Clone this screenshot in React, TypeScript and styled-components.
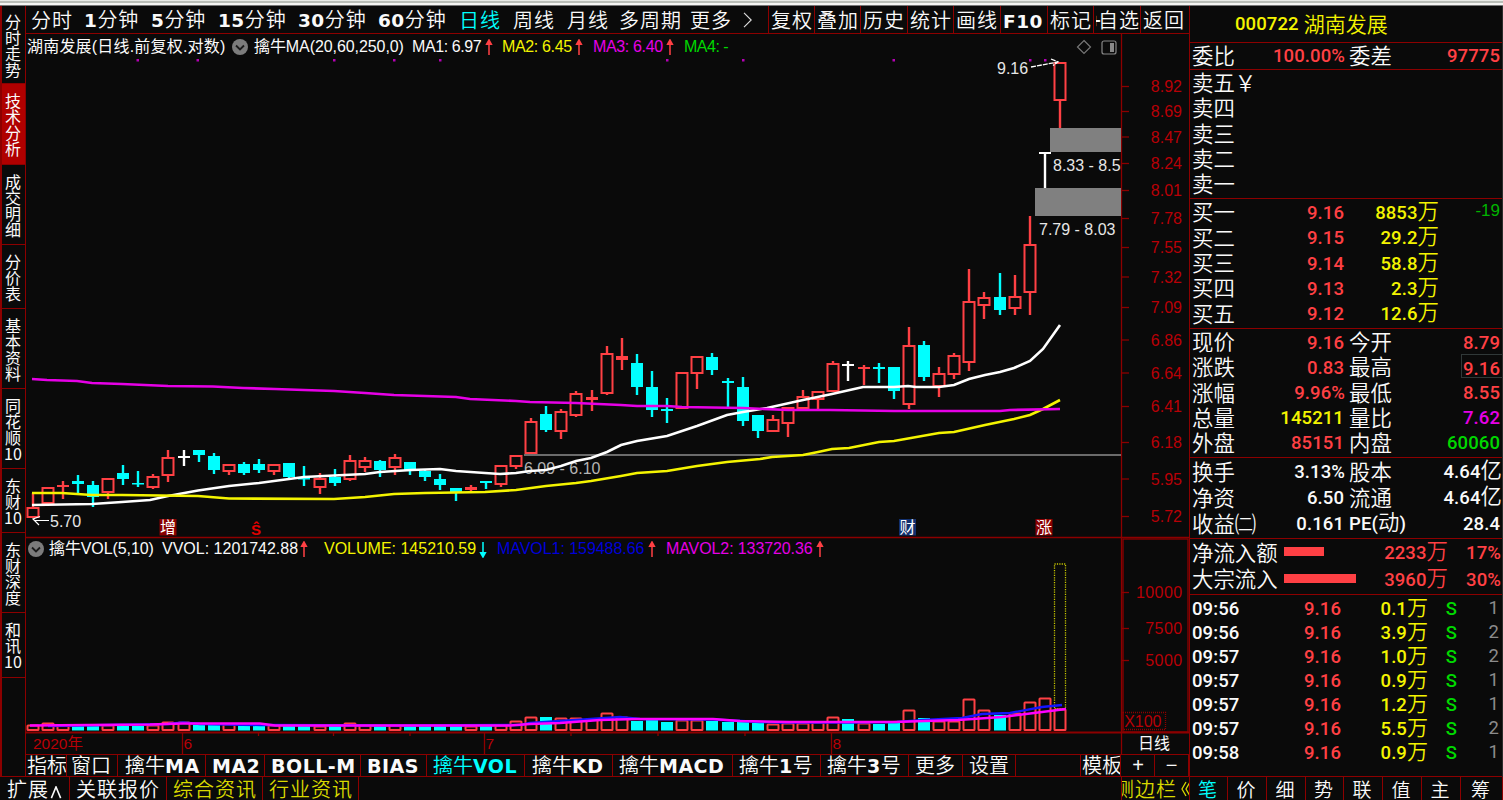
import React from 'react';
import styled, { createGlobalStyle } from 'styled-components';

const LINE = '#8c0000';
const RED = '#ff4044';
const CYAN = '#00ffff';
const YELLOW = '#f4f400';
const MAGENTA = '#e600e6';
const GREEN = '#00d800';
const WHITE = '#fafafa';
const AXIS = '#b80006';

const CJK = '"Noto Sans CJK SC", sans-serif';

/* ---------- data ---------- */

type Kind = 'r' | 'c' | 'w';
// kind, body top, body bottom, high, low, top of the volume bar
type Candle = [Kind, number, number, number, number, number];

const FIRST_X = 32.5;
const STEP = 15.11;
const VOL_BASE = 730;

const candles: Candle[] = [
  ['r', 507, 517, 493, 518, 725],
  ['r', 487, 503, 487, 503, 723],
  ['r', 485, 487, 481, 499, 725],
  ['c', 481, 484, 475, 493, 726],
  ['c', 485, 497, 481, 507, 726],
  ['r', 478, 492, 478, 499, 725],
  ['c', 473, 479, 465, 485, 726],
  ['c', 483, 484, 471, 487, 726],
  ['r', 476, 487, 474, 489, 725],
  ['r', 457, 475, 450, 482, 722],
  ['w', 456, 458, 450, 466, 722],
  ['c', 450, 455, 450, 462, 725],
  ['c', 456, 470, 453, 474, 725],
  ['r', 464, 471, 464, 475, 724],
  ['c', 464, 473, 462, 475, 725],
  ['c', 464, 470, 459, 473, 725],
  ['r', 464, 471, 464, 475, 725],
  ['c', 463, 477, 463, 479, 726],
  ['c', 478, 479, 466, 486, 726],
  ['r', 478, 487, 473, 494, 726],
  ['c', 477, 483, 469, 486, 726],
  ['r', 460, 479, 455, 481, 723],
  ['r', 460, 467, 457, 472, 725],
  ['c', 461, 470, 460, 477, 726],
  ['r', 457, 467, 454, 475, 725],
  ['c', 462, 470, 462, 475, 726],
  ['c', 471, 477, 469, 481, 726],
  ['c', 479, 485, 474, 490, 726],
  ['c', 488, 493, 488, 501, 725],
  ['r', 487, 490, 485, 493, 726],
  ['c', 481, 483, 481, 489, 726],
  ['r', 465, 484, 465, 487, 725],
  ['r', 455, 466, 455, 469, 721],
  ['r', 421, 453, 418, 453, 717],
  ['c', 414, 430, 406, 432, 717],
  ['r', 411, 431, 409, 439, 718],
  ['r', 393, 415, 391, 417, 718],
  ['r', 397, 400, 390, 411, 719],
  ['r', 353, 393, 346, 395, 713],
  ['r', 356, 360, 338, 370, 717],
  ['c', 363, 387, 354, 395, 721],
  ['c', 387, 410, 371, 417, 720],
  ['c', 409, 411, 398, 423, 722],
  ['r', 372, 408, 372, 409, 720],
  ['r', 356, 373, 356, 389, 720],
  ['c', 357, 370, 353, 375, 721],
  ['c', 381, 383, 378, 407, 722],
  ['c', 387, 421, 377, 426, 721],
  ['c', 415, 431, 415, 438, 723],
  ['r', 419, 431, 415, 431, 724],
  ['r', 407, 423, 407, 437, 723],
  ['r', 396, 408, 390, 408, 723],
  ['r', 391, 399, 391, 409, 722],
  ['r', 363, 391, 361, 391, 717],
  ['w', 364, 366, 361, 381, 719],
  ['r', 367, 369, 365, 385, 723],
  ['c', 367, 369, 363, 383, 724],
  ['c', 367, 391, 367, 399, 723],
  ['r', 345, 404, 327, 409, 710],
  ['c', 345, 377, 341, 381, 718],
  ['r', 373, 386, 367, 397, 721],
  ['r', 355, 374, 353, 379, 721],
  ['r', 301, 362, 269, 371, 699],
  ['r', 297, 305, 292, 319, 710],
  ['c', 297, 310, 273, 315, 715],
  ['r', 296, 308, 275, 315, 713],
  ['r', 244, 292, 216, 315, 702],
  ['w', 152, 154, 152, 188, 698],
  ['r', 62, 100, 62, 128, 709],
];

const ma20 =
  '32,505 62,504.5 92,504 122,502 150,500 168,496 198,490.5 229,486 259,483 289,479 304,477 334,475.5 365,474 380,472 411,470 440,469 456,471 485,473 500,474 516,473 530,471 546,470 561,466 576,461 591,458 607,452 621,445 637,441 667,436 697,426 727,415 743,412 767,408 803,400 832,394 863,387 894,387 908,386 916,387 939,387 954,385 969,379 985,375 1000,372 1014,368 1030,361 1043,349 1060,325';
const ma60 =
  '32,493 62,493 92,495 122,495 198,496 229,498.5 334,499 365,497 394,494 425,493 485,492 516,490 546,486 576,483 591,481 621,476 637,473 667,471 697,466 727,462 760,459 772,457 803,455 818,452 832,449 849,448 879,442 894,441 939,433 954,432 985,425 1014,419 1030,415 1043,409 1060,400';
const ma250 =
  '32,379 47,380 77,381 92,383 122,384 168,386 213,386.5 243,388 275,389 304,390 334,391 365,393 394,395 425,396 456,397 470,399 516,401 530,402 576,403 621,405 637,406 667,406 682,407 743,408 788,410 830,410 894,411 1000,411 1010,410 1060,409';
const mavol1 =
  '48,726 168,724 183,722.5 200,724 260,725 400,725.5 520,725 530,723 560,721 591,719 620,717 640,719 713,719.5 760,722 777,722.5 850,722.5 897,722 924,720 962,718 982,714 1010,713 1042,707 1062,705';
const mavol2 =
  '30,725.5 150,724.5 182,723.5 260,723.5 275,725.5 510,725.5 530,724 560,723 600,720 636,719 713,719 740,721 789,722 837,722 893,722 958,720 1002,717 1034,713 1066,709';

const signalDots = [137.5, 197.5, 334, 394, 440, 667, 743, 893.5, 1030, 1045];

const priceAxis: [string, number][] = [
  ['8.92', 86.5],
  ['8.69', 111.5],
  ['8.47', 137],
  ['8.24', 163.5],
  ['8.01', 190.5],
  ['7.78', 218.5],
  ['7.55', 247.5],
  ['7.32', 277],
  ['7.09', 307.5],
  ['6.86', 340],
  ['6.64', 373],
  ['6.41', 406.5],
  ['6.18', 442.5],
  ['5.95', 479],
  ['5.72', 516.5],
];

const volumeAxis: [string, number][] = [
  ['10000', 592.5],
  ['7500', 628.5],
  ['5000', 660.5],
];

const sideTabs: [string[], number][] = [
  [['分', '时', '走', '势'], 78],
  [['技', '术', '分', '析'], 81],
  [['成', '交', '明', '细'], 80],
  [['分', '价', '表'], 64],
  [['基', '本', '资', '料'], 80],
  [['同', '花', '顺', '10'], 80],
  [['东', '财', '10'], 64],
  [['东', '财', '深', '度'], 80],
  [['和', '讯', '10'], 65],
];

const periods: [string, number][] = [
  ['分时', 53],
  ['1分钟', 67],
  ['5分钟', 67],
  ['15分钟', 80],
  ['30分钟', 80],
  ['60分钟', 81],
  ['日线', 54],
  ['周线', 54],
  ['月线', 52],
  ['多周期', 71],
  ['更多', 52],
];

const tools: [string, number][] = [
  ['复权', 46],
  ['叠加', 46],
  ['历史', 47],
  ['统计', 46],
  ['画线', 47],
  ['F10', 47],
  ['标记', 46],
  ['+自选', 47],
  ['返回', 49],
];

const indicatorTabs: [string, number, number][] = [
  ['指标', 41, 1],
  ['窗口', 51, 4],
  ['擒牛MA', 88, 7],
  ['MA2', 59, 6],
  ['BOLL-M', 96, 6],
  ['BIAS', 66, 6],
  ['擒牛VOL', 98, 6],
  ['擒牛KD', 88, 7],
  ['擒牛MACD', 120, 6],
  ['擒牛1号', 88, 6],
  ['擒牛3号', 88, 6],
  ['更多', 54, 6],
  ['设置', 53, 6],
];

const sellRows = ['卖五', '卖四', '卖三', '卖二', '卖一'];

const buyRows = [
  ['买一', '9.16', '8853万', '-19'],
  ['买二', '9.15', '29.2万', ''],
  ['买三', '9.14', '58.8万', ''],
  ['买四', '9.13', '2.3万', ''],
  ['买五', '9.12', '12.6万', ''],
];

type Quote = [string, string, string, string, string, string];
const quoteRows: Quote[] = [
  ['现价', '9.16', RED, '今开', '8.79', RED],
  ['涨跌', '0.83', RED, '最高', '9.16', RED],
  ['涨幅', '9.96%', RED, '最低', '8.55', RED],
  ['总量', '145211', YELLOW, '量比', '7.62', MAGENTA],
  ['外盘', '85151', RED, '内盘', '60060', GREEN],
];
const capitalRows: Quote[] = [
  ['换手', '3.13%', WHITE, '股本', '4.64亿', WHITE],
  ['净资', '6.50', WHITE, '流通', '4.64亿', WHITE],
  ['收益㈡', '0.161', WHITE, 'PE(动)', '28.4', WHITE],
];

const ticks = [
  ['09:56', '0.1万', '1'],
  ['09:56', '3.9万', '2'],
  ['09:57', '1.0万', '2'],
  ['09:57', '0.9万', '1'],
  ['09:57', '1.2万', '1'],
  ['09:57', '5.5万', '2'],
  ['09:58', '0.9万', '1'],
];

const panelTabs: [string, number][] = [
  ['笔', 38],
  ['价', 39],
  ['细', 39],
  ['势', 38],
  ['联', 39],
  ['值', 39],
  ['主', 39],
  ['筹', 42],
];

/* ---------- text helpers ---------- */

// Latin runs are set in a heavy face while the Chinese around them stays light
const Mixed = ({ text, as: Run }: { text: string; as: React.ElementType }) => (
  <>
    {(text.match(/[\x21-\x7e]+|[^\x21-\x7e]+/g) || []).map((part, i) =>
      /^[\x21-\x7e]/.test(part) ? <Run key={i}>{part}</Run> : <span key={i}>{part}</span>
    )}
  </>
);

const Heavy = styled.span`
  font-family: 'DejaVu Sans', sans-serif;
  font-weight: 700;
  font-size: 18.5px;
  letter-spacing: 0.5px;
`;

const TabHeavy = styled(Heavy)`
  font-size: 19px;
`;

const Digits = styled.span`
  font-family: Roboto, sans-serif;
  font-weight: 500;
  font-size: 18.5px;
  letter-spacing: 0.1px;
`;

/* ---------- app ---------- */

const App = () => (
  <>
    <GlobalStyle />
    <Window>
      <WindowEdge />
      <Body>
        <Workspace>
          <Upper>
            <SideBar>
              {sideTabs.map(([chars, height], i) => (
                <SideTab key={i} $h={height} $active={i === 1}>
                  {chars.map((c, j) => (
                    <span key={j}>{c}</span>
                  ))}
                </SideTab>
              ))}
            </SideBar>
            <Content>
              <Toolbar>
                {periods.map(([name, width]) => (
                  <Period key={name} $w={width} $active={name === '日线'}>
                    <Mixed text={name} as={Heavy} />
                  </Period>
                ))}
                <MoreArrow viewBox="0 0 12 20">
                  <path d="M1 1 L10 10 L1 19" />
                </MoreArrow>
                {tools.map(([name, width]) => (
                  <Tool key={name} $w={width}>
                    {name === '+自选' ? (
                      <Clipped>
                        <Plus>+</Plus>自选
                      </Clipped>
                    ) : (
                      <Mixed text={name} as={Heavy} />
                    )}
                  </Tool>
                ))}
              </Toolbar>
              <ChartArea>
                <PriceHeader />
                <VolumeHeader />
                <Chart />
              </ChartArea>
              <BottomRows>
                <IndicatorBar>
                  {indicatorTabs.map(([name, width, pad]) => (
                    <Indicator key={name} $w={width} $pad={pad} $active={name === '擒牛VOL'}>
                      <Mixed text={name} as={TabHeavy} />
                    </Indicator>
                  ))}
                  <Indicator $w={65} $pad={0} />
                  <Indicator $w={40} $pad={1}>
                    模板
                  </Indicator>
                </IndicatorBar>
                <Zoom $w={33}>+</Zoom>
                <Zoom $w={34}>−</Zoom>
              </BottomRows>
            </Content>
          </Upper>
          <StatusBar>
            <Status $w={70} $pad={7}>
              扩展
              <Caret viewBox="0 0 14 14">
                <path d="M2 13 L7 1 L12 13" />
              </Caret>
            </Status>
            <Status $w={97} $pad={6}>
              关联报价
            </Status>
            <Status $w={96} $pad={6} $color="#d8d800">
              综合资讯
            </Status>
            <Status $w={96} $pad={6} $color="#d8d800">
              行业资讯
            </Status>
            <StatusFill />
            <SideToggle>
              侧边栏
              <Chevrons viewBox="0 0 8 16">
                <path d="M5 1 L1 8 L5 15 M9 1 L5 8 L9 15" />
              </Chevrons>
            </SideToggle>
          </StatusBar>
        </Workspace>
        <QuotePanel />
      </Body>
    </Window>
  </>
);

const Fold = () => (
  <FoldIcon viewBox="0 0 16 16">
    <circle cx="8" cy="8" r="8" fill="#7c7c7c" />
    <path d="M4 6.5 L8 10.5 L12 6.5" stroke="#1c1c1c" strokeWidth="1.8" fill="none" />
  </FoldIcon>
);

const Arrow = ({ down = false }: { down?: boolean }) => (
  <ArrowIcon viewBox="0 0 8 18">
    {down ? (
      <path d="M4 1 V17 M1.5 12.5 L4 17 L6.5 12.5 Z" stroke={CYAN} fill={CYAN} strokeWidth="1.6" />
    ) : (
      <path d="M4 17 V1 M1.5 5.5 L4 1 L6.5 5.5 Z" stroke={RED} fill={RED} strokeWidth="1.6" />
    )}
  </ArrowIcon>
);

const PriceHeader = () => (
  <Legend $top={4} $left={1}>
    <LegendText $w={205} $ls={0.2}>
      湖南发展(日线.前复权.对数)
    </LegendText>
    <Fold />
    <LegendText $w={158} $ls={-0.08} $gap={6}>
      擒牛MA(20,60,250,0)
    </LegendText>
    <LegendText $w={73} $ls={-0.4}>
      MA1: 6.97
    </LegendText>
    <Arrow />
    <LegendText $w={73} $color={YELLOW} $ls={-0.35} $gap={9}>
      MA2: 6.45
    </LegendText>
    <Arrow />
    <LegendText $w={73} $color={MAGENTA} $ls={-0.35} $gap={10}>
      MA3: 6.40
    </LegendText>
    <Arrow />
    <LegendText $w={44} $color={GREEN} $ls={-0.5} $gap={10}>
      MA4: -
    </LegendText>
    <LegendTools viewBox="0 0 42 16">
      <path d="M8 1.5 L14.5 8 L8 14.5 L1.5 8 Z" fill="none" stroke="#777" strokeWidth="1.2" />
      <rect x="26" y="2" width="14" height="13" rx="2" fill="none" stroke="#888" strokeWidth="1.2" />
      <rect x="34" y="4" width="4" height="9" fill="#888" />
    </LegendTools>
  </Legend>
);

const VolumeHeader = () => (
  <Legend $top={506} $left={2}>
    <Fold />
    <LegendText $w={113} $gap={5} $ls={-0.1}>
      擒牛VOL(5,10)
    </LegendText>
    <LegendText $w={138} $ls={0}>
      VVOL: 1201742.88
    </LegendText>
    <Arrow />
    <LegendText $w={155} $color={YELLOW} $ls={0} $gap={16}>
      VOLUME: 145210.59
    </LegendText>
    <Arrow down />
    <LegendText $w={151} $color="#0000d8" $ls={-0.05} $gap={10}>
      MAVOL1: 159488.66
    </LegendText>
    <Arrow />
    <LegendText $w={150} $color={MAGENTA} $ls={-0.1} $gap={10}>
      MAVOL2: 133720.36
    </LegendText>
    <Arrow />
  </Legend>
);

const candleColor = { r: RED, c: CYAN, w: '#fff' };

const CandleShape = ({ candle, index }: { candle: Candle; index: number }) => {
  const [kind, top, bottom, high, low] = candle;
  const x = Math.round(FIRST_X + STEP * index);
  const color = candleColor[kind];
  const hollow = kind === 'r' && bottom - top > 5;
  return (
    <g stroke={color} strokeWidth={2.4}>
      {high < top && <line x1={x} x2={x} y1={high} y2={top} />}
      {low > bottom && <line x1={x} x2={x} y1={bottom} y2={low} />}
      {hollow ? (
        <rect x={x - 5.5} y={top + 1} width={11} height={bottom - top - 1} fill="none" strokeWidth={2} />
      ) : (
        <rect x={x - 6} y={top} width={12} height={Math.max(bottom - top, 1.5)} fill={color} stroke="none" />
      )}
    </g>
  );
};

const VolumeShape = ({ candle, index }: { candle: Candle; index: number }) => {
  const [kind, , , , , top] = candle;
  const x = Math.round(FIRST_X + STEP * index);
  const filled = kind === 'c' || index === 54;
  return filled ? (
    <rect x={x - 6} y={top} width={12} height={VOL_BASE - top + 0.5} fill={CYAN} />
  ) : (
    <rect
      x={x - 5.5}
      y={top + 0.5}
      width={11}
      height={VOL_BASE - top - 0.5}
      rx={0.5}
      fill="none"
      stroke={RED}
      strokeWidth={2}
    />
  );
};

const Badge = ({ x, color, text }: { x: number; color: string; text: string }) => (
  <g>
    <rect x={x - 8.5} y={519} width={17} height={16.5} fill={color} />
    <text x={x} y={533} fontSize={16} textAnchor="middle" fill="#fff">
      {text}
    </text>
  </g>
);

const Chart = () => (
  <ChartSvg viewBox="26 34 1163 720">
    {/* frame */}
    <g stroke={LINE} strokeWidth={1.3}>
      <line x1={1121.5} x2={1121.5} y1={34} y2={754} />
      <line x1={26} x2={1189} y1={537.5} y2={537.5} />
      <line x1={26} x2={1189} y1={732.5} y2={732.5} strokeWidth={2} />
      <rect x={1123} y={539} width={65} height={193} fill="none" />
      <line x1={182.5} x2={182.5} y1={733} y2={754} />
      <line x1={484.5} x2={484.5} y1={733} y2={754} />
      <line x1={831.5} x2={831.5} y1={733} y2={754} />
      {[258.5, 333.5, 410, 571, 658, 745].map((x) => (
        <line key={x} x1={x} x2={x} y1={733} y2={736} />
      ))}
      {[...priceAxis, ...volumeAxis].map(([label, y]) => (
        <line key={label} x1={1122} x2={1129} y1={y} y2={y} />
      ))}
      <rect x={1123} y={712.5} width={42.5} height={17} fill="none" strokeDasharray="1 1" />
    </g>

    {/* axis labels */}
    <g fontSize={16} fill={AXIS} textAnchor="end">
      {priceAxis.map(([label, y]) => (
        <text key={label} x={1182} y={y + 5.5}>
          {label}
        </text>
      ))}
      {volumeAxis.map(([label, y]) => (
        <text key={label} x={1182.5} y={y + 5.5} letterSpacing={0.4}>
          {label}
        </text>
      ))}
      <text x={1161.5} y={727}>
        X100
      </text>
    </g>
    <g fontSize={15.5} fill={AXIS}>
      <text x={33} y={749}>
        2020年
      </text>
      <text x={183.5} y={749}>
        6
      </text>
      <text x={485.5} y={749}>
        7
      </text>
      <text x={832.5} y={749}>
        8
      </text>
    </g>
    <text x={1154} y={749} fontSize={16} fill={WHITE} textAnchor="middle">
      日线
    </text>

    {/* gaps */}
    <rect x={1050} y={128} width={71} height={24} fill="#808080" />
    <rect x={1035} y={188} width={86} height={28} fill="#808080" />
    <line x1={524} x2={1121} y1={455} y2={455} stroke="#8c8c8c" strokeWidth={1.5} />
    <svg x={26} y={34} width={1095} height={503} viewBox="26 34 1095 503">
      <g fontSize={16} fill="#e6e6e6">
        <text x={1053} y={171}>
          8.33 - 8.55
        </text>
        <text x={1039} y={235}>
          7.79 - 8.03
        </text>
        <text x={524} y={474} fill="#b4b4b4">
          6.09 - 6.10
        </text>
        <text x={997} y={73.5}>
          9.16
        </text>
        <text x={50} y={527}>
          5.70
        </text>
      </g>
    </svg>
    {signalDots.map((x) => (
      <rect key={x} x={x - 1} y={59} width={2.5} height={2.5} fill="#b400b4" />
    ))}

    {candles.map((candle, i) => (
      <CandleShape key={i} candle={candle} index={i} />
    ))}
    <path d="M1031 67 L1058 62 M1051 59 L1058 62 L1053 65.5" stroke="#fff" strokeWidth={1.3} fill="none" strokeDasharray="5 1" />
    <path d="M49 520.5 H35 M39 525 L33 519 L40 516.5" stroke="#fff" strokeWidth={1.2} fill="none" />

    <g fill="none" strokeWidth={2.6}>
      <polyline points={ma20} stroke="#fff" />
      <polyline points={ma60} stroke={YELLOW} />
      <polyline points={ma250} stroke={MAGENTA} />
    </g>

    <Badge x={168} color="#8a0000" text="增" />
    <Badge x={907.5} color="#12306e" text="财" />
    <Badge x={1044} color="#8a0000" text="涨" />
    <text x={256} y={535} fontSize={15} fontWeight={700} textAnchor="middle" fill="#e00000">
      Ŝ
    </text>

    {/* volume */}
    {candles.map((candle, i) => (
      <VolumeShape key={i} candle={candle} index={i} />
    ))}
    <rect x={1054.5} y={564} width={11} height={145} fill="none" stroke="#c8c800" strokeWidth={1.3} strokeDasharray="1.2 1.2" />
    <g fill="none" strokeWidth={2.4}>
      <polyline points={mavol1} stroke="#1414ff" />
      <polyline points={mavol2} stroke="#ff00ff" />
    </g>
  </ChartSvg>
);

const QuoteRow = ({ row }: { row: Quote }) => {
  const [label, value, color, label2, value2, color2] = row;
  return (
    <Pair>
      <Label>{label}</Label>
      <Value $color={color} $end={value.endsWith('%') ? 4 : 5}>
        <Mixed text={value} as={Digits} />
      </Value>
      <Label>
        <Mixed text={label2} as={Digits} />
      </Label>
      <Value $color={color2} $end={value2.endsWith('亿') ? 0 : 2} $boxed={label2 === '最高'}>
        <Mixed text={value2} as={Digits} />
      </Value>
    </Pair>
  );
};

const QuotePanel = () => (
  <Panel>
    <Title>
      <Digits>000722</Digits>
      <TitleName>湖南发展</TitleName>
    </Title>
    <Section $h={27}>
      <QuoteRow row={['委比', '100.00%', RED, '委差', '97775', RED]} />
    </Section>
    <Section $h={129}>
      {sellRows.map((name, i) => (
        <Pair key={name}>
          <Label>
            {name}
            {i === 0 && '￥'}
          </Label>
        </Pair>
      ))}
    </Section>
    <Section $h={130}>
      {buyRows.map(([name, price, amount, change]) => (
        <Depth key={name}>
          <Label>{name}</Label>
          <Value $color={RED}>
            <Digits>{price}</Digits>
          </Value>
          <Value $color={YELLOW} $end={0}>
            <Mixed text={amount} as={Digits} />
          </Value>
          <Change>{change}</Change>
        </Depth>
      ))}
    </Section>
    <Section $h={129}>
      {quoteRows.map((row) => (
        <QuoteRow key={row[0]} row={row} />
      ))}
    </Section>
    <Section $h={81}>
      {capitalRows.map((row) => (
        <QuoteRow key={row[0]} row={row} />
      ))}
    </Section>
    <Section $h={56}>
      <Flow>
        <Label>净流入额</Label>
        <FlowBar $w={40} />
        <Value $color={RED} $end={0}>
          <Mixed text="2233万" as={Digits} />
        </Value>
        <Value $color={RED} $end={1}>
          <Digits>17%</Digits>
        </Value>
      </Flow>
      <Flow>
        <Label>大宗流入</Label>
        <FlowBar $w={72} />
        <Value $color={RED} $end={0}>
          <Mixed text="3960万" as={Digits} />
        </Value>
        <Value $color={RED} $end={1}>
          <Digits>30%</Digits>
        </Value>
      </Flow>
    </Section>
    <TickList>
      {ticks.map(([time, amount, count], i) => (
        <Tick key={i}>
          <Label>
            <Digits>{time}</Digits>
          </Label>
          <Value $color={RED}>
            <Digits>9.16</Digits>
          </Value>
          <Value $color={YELLOW} $end={0}>
            <Mixed text={amount} as={Digits} />
          </Value>
          <Value $color={GREEN} $end={2}>
            <Digits>S</Digits>
          </Value>
          <Count>{count}</Count>
        </Tick>
      ))}
    </TickList>
    <PanelTabs>
      {panelTabs.map(([name, width], i) => (
        <PanelTab key={name} $w={width} $active={i === 0}>
          {name}
        </PanelTab>
      ))}
    </PanelTabs>
  </Panel>
);

/* ---------- styles ---------- */

const GlobalStyle = createGlobalStyle`
  * { box-sizing: border-box; }
  body {
    margin: 0;
    background: #0a0a0a;
    overflow: hidden;
  }
`;

const Window = styled.div`
  width: 1503px;
  height: 800px;
  display: flex;
  flex-direction: column;
  background: #0a0a0a;
  color: ${WHITE};
  font-family: ${CJK};
  font-weight: 350;
  font-size: 20px;
  white-space: nowrap;
  overflow: hidden;
`;

const WindowEdge = styled.div`
  height: 6px;
  flex: none;
  background: linear-gradient(#e8eae6 0 1px, #b9bdb7 1px 3px, #f4f4f2 3px 5px, #777 5px 6px);
`;

const Body = styled.div`
  display: flex;
  height: 794px;
`;

const Workspace = styled.div`
  width: 1189px;
  display: flex;
  flex-direction: column;
`;

const Upper = styled.div`
  display: flex;
  height: 770px;
`;

const SideBar = styled.div`
  width: 26px;
  flex: none;
  border-left: 2px solid ${LINE};
  border-right: 1px solid ${LINE};
`;

const SideTab = styled.div<{ $h: number; $active: boolean }>`
  height: ${(p) => p.$h}px;
  border-bottom: 1px solid ${LINE};
  background: ${(p) => (p.$active ? '#b00000' : 'transparent')};
  display: flex;
  flex-direction: column;
  align-items: center;
  justify-content: center;
  padding-right: 1px;
  font-size: 16px;
  font-weight: 400;
  line-height: 16px;
`;

const Content = styled.div`
  width: 1163px;
  display: flex;
  flex-direction: column;
`;

const Toolbar = styled.div`
  height: 28px;
  flex: none;
  display: flex;
  align-items: center;
  padding-left: 5px;
  border-bottom: 1px solid ${LINE};
  letter-spacing: 1px;
  line-height: 27px;
`;

const Period = styled.div<{ $w: number; $active: boolean }>`
  width: ${(p) => p.$w}px;
  flex: none;
  color: ${(p) => (p.$active ? CYAN : WHITE)};
`;

const MoreArrow = styled.svg`
  width: 12px;
  height: 16px;
  flex: none;
  margin-right: 14px;
  fill: none;
  stroke: #ddd;
  stroke-width: 1.4;
`;

const Tool = styled.div<{ $w: number }>`
  width: ${(p) => p.$w}px;
  height: 27px;
  flex: none;
  padding-left: 2px;
  border-left: 1px solid ${LINE};
`;

const Clipped = styled.div`
  display: flex;
  justify-content: flex-end;
  overflow: hidden;
`;

const Plus = styled.span`
  width: 12px;
  flex: none;
  margin-right: -3px;
  font-weight: 700;
`;

const ChartArea = styled.div`
  position: relative;
  height: 720px;
  flex: none;
`;

const ChartSvg = styled.svg`
  display: block;
  width: 1163px;
  height: 720px;
  font-family: 'Liberation Sans', ${CJK};
  font-weight: 400;
`;

const Legend = styled.div<{ $top: number; $left: number }>`
  position: absolute;
  top: ${(p) => p.$top}px;
  left: ${(p) => p.$left}px;
  width: 1095px;
  height: 18px;
  display: flex;
  align-items: center;
  font: 400 16px/18px 'Liberation Sans', ${CJK};
`;

const LegendText = styled.span<{ $w: number; $color?: string; $ls: number; $gap?: number }>`
  width: ${(p) => p.$w}px;
  flex: none;
  margin-left: ${(p) => p.$gap || 0}px;
  letter-spacing: ${(p) => p.$ls}px;
  color: ${(p) => p.$color || WHITE};
`;

const FoldIcon = styled.svg`
  width: 16px;
  height: 16px;
  flex: none;
`;

const ArrowIcon = styled.svg`
  width: 8px;
  height: 17px;
  flex: none;
`;

const LegendTools = styled.svg`
  width: 42px;
  height: 16px;
  margin-left: auto;
  margin-right: 4px;
`;

const BottomRows = styled.div`
  height: 22px;
  display: flex;
  border-top: 1px solid ${LINE};
`;

const IndicatorBar = styled.div`
  width: 1096px;
  flex: none;
  display: flex;
`;

const Indicator = styled.div<{ $w: number; $pad: number; $active?: boolean }>`
  width: ${(p) => p.$w}px;
  flex: none;
  overflow: hidden;
  padding-left: ${(p) => p.$pad}px;
  border-right: 1px solid ${LINE};
  color: ${(p) => (p.$active ? CYAN : WHITE)};
  line-height: 20px;
`;

const Zoom = styled.div<{ $w: number }>`
  width: ${(p) => p.$w}px;
  border-right: 1px solid ${LINE};
  text-align: center;
  font: 400 20px/20px 'Liberation Sans', sans-serif;
`;

const StatusBar = styled.div`
  height: 24px;
  display: flex;
  border-top: 1px solid ${LINE};
  letter-spacing: 1px;
  line-height: 24px;
`;

const Status = styled.div<{ $w: number; $pad: number; $color?: string }>`
  width: ${(p) => p.$w}px;
  flex: none;
  padding-left: ${(p) => p.$pad}px;
  border-right: 1px solid ${LINE};
  color: ${(p) => p.$color || WHITE};
`;

const Caret = styled.svg`
  width: 14px;
  height: 13px;
  vertical-align: -2px;
  fill: none;
  stroke: ${WHITE};
  stroke-width: 1.7;
`;

const StatusFill = styled.div`
  flex: 1;
`;

const SideToggle = styled.div`
  width: 68px;
  flex: none;
  display: flex;
  align-items: center;
  justify-content: flex-end;
  overflow: hidden;
  border-left: 1px solid ${LINE};
  color: #d8d800;
`;

const Chevrons = styled.svg`
  width: 8px;
  height: 16px;
  flex: none;
  margin-left: 4px;
  fill: none;
  stroke: #d8d800;
  stroke-width: 1.3;
`;

const Panel = styled.div`
  width: 314px;
  display: flex;
  flex-direction: column;
  border-left: 1.5px solid ${LINE};
  border-right: 1px solid #2c2c2c;
`;

const Title = styled.div`
  height: 37px;
  flex: none;
  display: flex;
  align-items: center;
  gap: 5px;
  padding-left: 45px;
  border-bottom: 1px solid ${LINE};
  color: ${YELLOW};
  font-size: 21px;
`;

const TitleName = styled.span`
  margin-bottom: 2px;
`;

const Section = styled.div<{ $h: number }>`
  height: ${(p) => p.$h}px;
  flex: none;
  padding: 1px 0 1px 2px;
  border-bottom: 1px solid ${LINE};
  display: flex;
  flex-direction: column;
  font-size: 21.4px;
`;

const Row = styled.div`
  flex: 1;
  display: grid;
  grid-template-rows: 100%;
  align-items: center;
  padding-bottom: 3px;
  line-height: 20px;
  min-height: 0;
`;

const Pair = styled(Row)`
  grid-template-columns: 75px 82px 64px 1fr;
`;

const Depth = styled(Row)`
  grid-template-columns: 75px 80px 92px 1fr;
`;

const Flow = styled(Row)`
  grid-template-columns: 92px 76px 88px 1fr;
`;

const Tick = styled(Row)`
  grid-template-columns: 75px 77px 84px 31px 1fr;
`;

const Label = styled.div``;

const Value = styled.div<{ $color: string; $end?: number; $boxed?: boolean }>`
  text-align: right;
  padding-right: ${(p) => p.$end ?? 3}px;
  color: ${(p) => p.$color};
  ${(p) =>
    p.$boxed &&
    `
    justify-self: end;
    height: 24px;
    line-height: 22px;
    padding-left: 1px;
    border: 1px solid #303838;
    border-right: 0;
  `}
`;

const Change = styled.div`
  text-align: right;
  padding-right: 2px;
  color: #00b400;
  font: 400 17px 'Liberation Sans', sans-serif;
`;

const FlowBar = styled.div<{ $w: number }>`
  width: ${(p) => p.$w}px;
  height: 9px;
  background: ${RED};
`;

const TickList = styled.div`
  height: 181px;
  flex: none;
  padding: 2px 0 11px 2px;
  display: flex;
  flex-direction: column;
  font-size: 21px;
`;

const Count = styled.div`
  text-align: right;
  padding-right: 3px;
  color: #8c8c8c;
  font: 400 18.5px Roboto, sans-serif;
`;

const PanelTabs = styled.div`
  height: 24px;
  display: flex;
  border-top: 1px solid ${LINE};
`;

const PanelTab = styled.div<{ $w: number; $active: boolean }>`
  width: ${(p) => p.$w}px;
  flex: none;
  padding-right: 2px;
  border-right: 1px solid ${LINE};
  text-align: center;
  font-size: 19px;
  line-height: 23px;
  color: ${(p) => (p.$active ? CYAN : WHITE)};
`;

export default App;
